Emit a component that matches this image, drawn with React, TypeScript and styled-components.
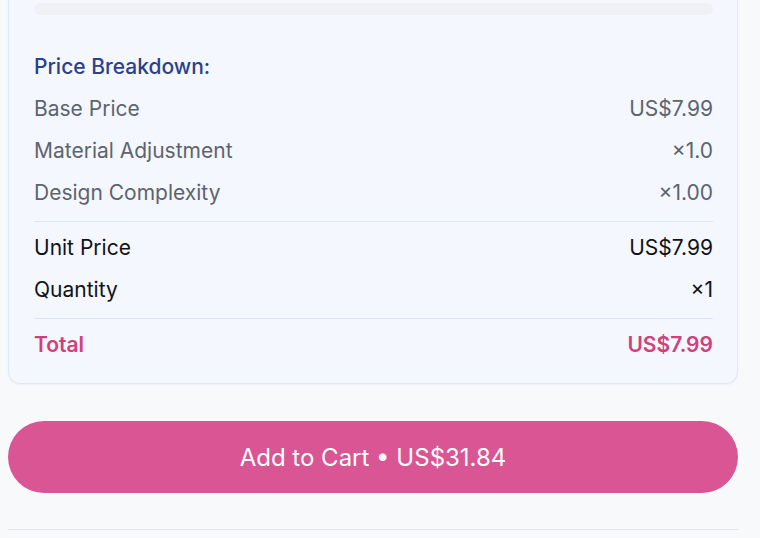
import styled, { createGlobalStyle } from "styled-components";

const GlobalStyle = createGlobalStyle`
  html, body {
    margin: 0;
    padding: 0;
    background: #f8f9fb;
  }
  body {
    font-family: Inter, "Noto Sans", "Liberation Sans", sans-serif;
    -webkit-font-smoothing: antialiased;
  }
`;

const Page = styled.div`
  width: 730px;
  margin: -38px 0 0 8px;
  display: flex;
  flex-direction: column;
`;

const Card = styled.div`
  background: #f4f7fd;
  border: 1px solid #dce7f7;
  border-radius: 12px;
  padding: 40px 24px 17px 25px;
  box-shadow: 0 1px 2px rgba(30, 50, 90, 0.04);
`;

const Track = styled.div`
  height: 12px;
  border-radius: 6px;
  background: #eff1f4;
`;

const Breakdown = styled.div`
  margin-top: 31px;
  display: flex;
  flex-direction: column;
`;

const Heading = styled.div`
  font-size: 21px;
  font-weight: 500;
  line-height: 28px;
  padding: 7px 0;
  color: #2b3f8c;
`;

const Row = styled.div<{ $tone?: "muted" | "strong" | "total" }>`
  display: flex;
  justify-content: space-between;
  align-items: center;
  font-size: 21px;
  line-height: 28px;
  padding: 7px 0;
  font-weight: ${(p) => (p.$tone === "total" ? 600 : 400)};
  color: ${(p) =>
    p.$tone === "total"
      ? "#d0407c"
      : p.$tone === "strong"
      ? "#111318"
      : "#5d6470"};
`;

const Divider = styled.hr`
  border: none;
  border-top: 1px solid #dbe6f5;
  margin: 7px 0 5px;
`;

const CartButton = styled.button`
  margin-top: 37px;
  height: 72px;
  border: none;
  border-radius: 36px;
  background: #d95594;
  color: #fff;
  font-family: inherit;
  font-size: 24px;
  font-weight: 400;
  cursor: pointer;
`;

const FooterRule = styled.div`
  margin-top: 36px;
  border-top: 1px solid #e2e4e8;
  height: 20px;
`;

const rows = [
  { label: "Base Price", value: "US$7.99" },
  { label: "Material Adjustment", value: "×1.0" },
  { label: "Design Complexity", value: "×1.00" },
];

export default function App() {
  return (
    <>
      <GlobalStyle />
      <Page>
        <Card>
          <Track />
          <Breakdown>
            <Heading>Price Breakdown:</Heading>
            {rows.map((r) => (
              <Row key={r.label} $tone="muted">
                <span>{r.label}</span>
                <span>{r.value}</span>
              </Row>
            ))}
            <Divider />
            <Row $tone="strong">
              <span>Unit Price</span>
              <span>US$7.99</span>
            </Row>
            <Row $tone="strong">
              <span>Quantity</span>
              <span>×1</span>
            </Row>
            <Divider />
            <Row $tone="total">
              <span>Total</span>
              <span>US$7.99</span>
            </Row>
          </Breakdown>
        </Card>
        <CartButton>Add to Cart • US$31.84</CartButton>
        <FooterRule />
      </Page>
    </>
  );
}
